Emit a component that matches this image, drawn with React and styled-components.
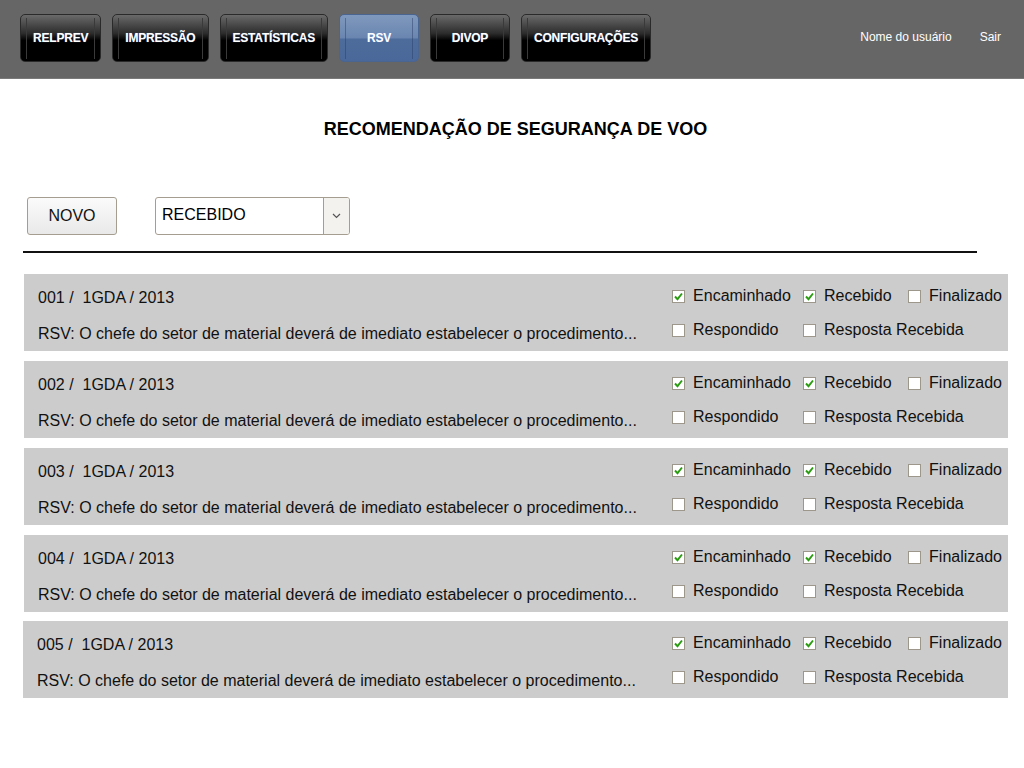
import React from "react";
import styled, { createGlobalStyle } from "styled-components";

const GlobalStyle = createGlobalStyle`
  body {
    margin: 0;
    background: #ffffff;
    font-family: "Liberation Sans", Arial, sans-serif;
    color: #111;
  }
`;

const Header = styled.header`
  height: 78px;
  background: #666666;
  border-bottom: 1px solid #7a7a7a;
  display: flex;
  align-items: center;
  justify-content: space-between;
  padding: 0 23px 0 20px;
`;

const Nav = styled.nav`
  display: flex;
  gap: 11px;
  margin-top: -2px;
`;

const NavButton = styled.a`
  position: relative;
  height: 48px;
  box-sizing: border-box;
  min-width: 80px;
  padding: 0 12px;
  display: flex;
  align-items: center;
  justify-content: center;
  border-radius: 5px;
  border: 1px solid ${(p) => (p.active ? "#4b6591" : "#2a2a2a")};
  background: ${(p) =>
    p.active
      ? "linear-gradient(#7f98bd 0%, #6a86b0 50%, #4d6c9c 52%, #4a6899 100%)"
      : "linear-gradient(#6a6a6a 0%, #2c2c2c 40%, #000 55%, #000 100%)"};
  color: #fff;
  font-size: 12px;
  font-weight: bold;
  letter-spacing: -0.2px;
  text-shadow: 0 0 1px rgba(120, 170, 255, 0.6);
  cursor: pointer;

  &::before,
  &::after {
    content: "";
    position: absolute;
    top: 3px;
    bottom: 2px;
    width: 1px;
    background: ${(p) => (p.active ? "rgba(40,60,100,0.45)" : "#3a3a3a")};
  }
  &::before {
    left: 5px;
  }
  &::after {
    right: 5px;
  }
`;

const UserArea = styled.div`
  display: flex;
  gap: 28px;
  color: #fff;
  font-size: 12px;
  margin-top: -4px;
`;

const Main = styled.main`
  padding: 0 16px 40px 23px;
`;

const Title = styled.h1`
  margin: 0;
  padding: 40px 0 0;
  text-align: center;
  font-size: 18px;
  font-weight: bold;
  color: #000;
`;

const Toolbar = styled.div`
  display: flex;
  align-items: center;
  gap: 38px;
  padding: 57px 0 16px 4px;
  width: 950px;
  border-bottom: 2px solid #111;
  margin-bottom: 21px;
`;

const NewButton = styled.button`
  width: 90px;
  height: 38px;
  border: 1px solid #a59d90;
  border-radius: 3px;
  background: linear-gradient(#fbfbfb, #e9e9e9);
  font-family: "Liberation Sans", Arial, sans-serif;
  font-size: 16px;
  color: #111;
`;

const Select = styled.div`
  width: 195px;
  height: 38px;
  box-sizing: border-box;
  border: 1px solid #a59d90;
  border-radius: 3px;
  display: flex;
  background: #fff;
  overflow: hidden;
`;

const SelectValue = styled.span`
  flex: 1;
  display: flex;
  align-items: center;
  padding-left: 6px;
  font-size: 16px;
  color: #000;
  margin-top: -3px;
`;

const SelectArrow = styled.span`
  width: 25px;
  border-left: 1px solid #a59d90;
  background: #f3f2ef;
  display: flex;
  align-items: center;
  justify-content: center;
`;

const List = styled.div`
  display: flex;
  flex-direction: column;
  gap: 10px;
  margin-left: 1px;
  width: 984px;
`;

const Card = styled.div`
  height: 77px;
  box-sizing: border-box;
  background: #cccccc;
  display: flex;
  justify-content: space-between;
  padding: 0 6px 0 14px;
  margin: ${(p) => (p.shift ? "-1px 0 0 -1px" : "0")};
`;

const CardText = styled.div`
  display: flex;
  flex-direction: column;
  gap: 18px;
  padding-top: 15px;
  font-size: 16px;
  color: #111;
`;

const Flags = styled.div`
  display: grid;
  grid-template-columns: 131px 105px auto;
  row-gap: 16px;
  padding-top: 13px;
  align-content: start;
`;

const Flag = styled.label`
  display: flex;
  align-items: center;
  gap: 8px;
  font-size: 16px;
  color: #111;
  white-space: nowrap;
`;

const Box = styled.span`
  flex-shrink: 0;
  width: 11px;
  height: 11px;
  border: 1px solid #9d968b;
  background: #fff;
  display: flex;
  align-items: center;
  justify-content: center;
  margin-top: 1px;
`;

const Check = ({ on }) => (
  <Box>
    {on && (
      <svg width="9" height="9" viewBox="0 0 9 9">
        <path d="M1 4.5 L3.5 7.2 L8 1.5" fill="none" stroke="#2a9c10" strokeWidth="1.9" />
      </svg>
    )}
  </Box>
);

const menu = ["RELPREV", "IMPRESSÃO", "ESTATÍSTICAS", "RSV", "DIVOP", "CONFIGURAÇÕES"];
const items = ["001", "002", "003", "004", "005"];

export default function App() {
  return (
    <>
      <GlobalStyle />
      <Header>
        <Nav>
          {menu.map((m) => (
            <NavButton key={m} active={m === "RSV" ? 1 : 0}>
              {m}
            </NavButton>
          ))}
        </Nav>
        <UserArea>
          <span>Nome do usuário</span>
          <span>Sair</span>
        </UserArea>
      </Header>
      <Main>
        <Title>RECOMENDAÇÃO DE SEGURANÇA DE VOO</Title>
        <Toolbar>
          <NewButton>NOVO</NewButton>
          <Select>
            <SelectValue>RECEBIDO</SelectValue>
            <SelectArrow>
              <svg width="9" height="6" viewBox="0 0 9 6">
                <path d="M1 1 L4.5 4.5 L8 1" fill="none" stroke="#555" strokeWidth="1.2" />
              </svg>
            </SelectArrow>
          </Select>
        </Toolbar>
        <List>
          {items.map((n, i) => (
            <Card key={n} shift={i === 4 ? 1 : 0}>
              <CardText>
                <span>{n} /&nbsp; 1GDA / 2013</span>
                <span>RSV: O chefe do setor de material deverá de imediato estabelecer o procedimento...</span>
              </CardText>
              <Flags>
                <Flag><Check on />Encaminhado</Flag>
                <Flag><Check on />Recebido</Flag>
                <Flag><Check />Finalizado</Flag>
                <Flag><Check />Respondido</Flag>
                <Flag><Check />Resposta Recebida</Flag>
              </Flags>
            </Card>
          ))}
        </List>
      </Main>
    </>
  );
}
